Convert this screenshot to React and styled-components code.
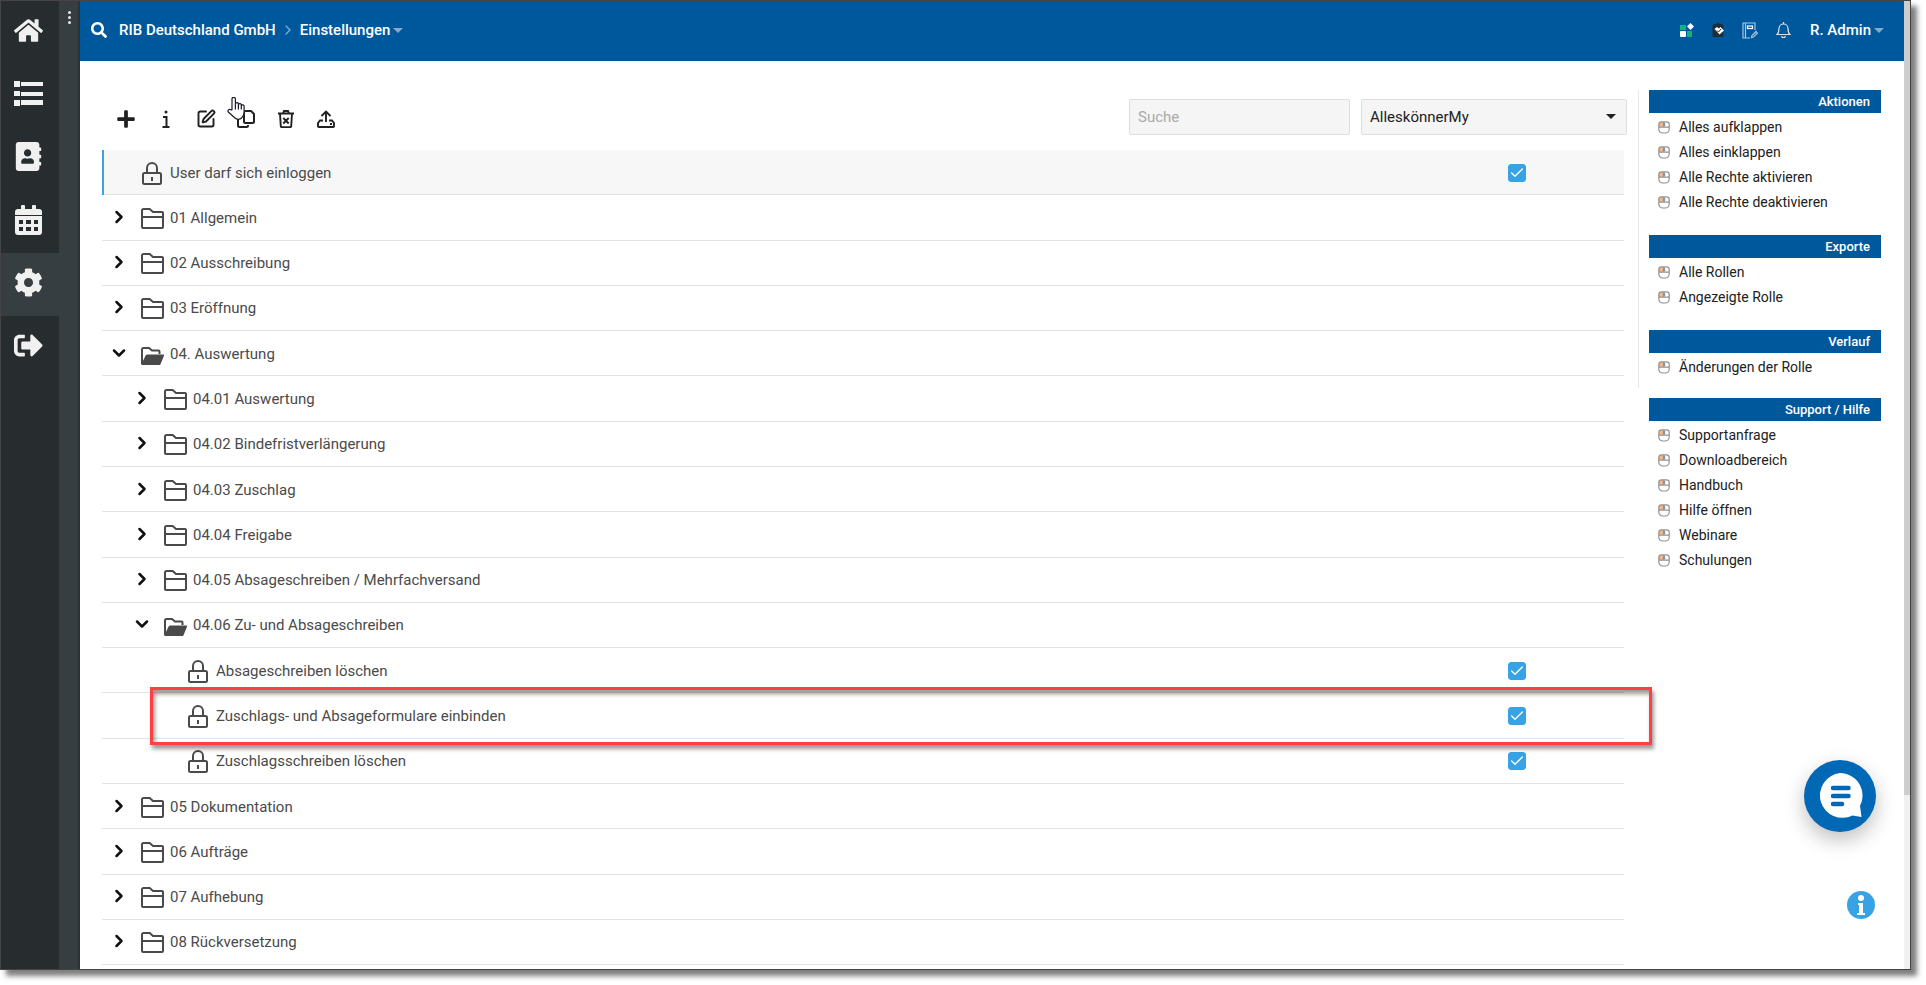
import styled, { createGlobalStyle } from "styled-components";
import { Check, ChevronDown, ChevronRight, SquarePen } from "lucide-react";
import {
  FaAddressBook,
  FaCog,
  FaHome,
  FaPlus,
  FaSearch,
  FaSignOutAlt,
} from "react-icons/fa";

const rows = [
  { label: "User darf sich einloggen", level: 0, type: "right", selected: true },
  { label: "01 Allgemein", level: 0, type: "folder" },
  { label: "02 Ausschreibung", level: 0, type: "folder" },
  { label: "03 Eröffnung", level: 0, type: "folder" },
  { label: "04. Auswertung", level: 0, type: "folder", open: true },
  { label: "04.01 Auswertung", level: 1, type: "folder" },
  { label: "04.02 Bindefristverlängerung", level: 1, type: "folder" },
  { label: "04.03 Zuschlag", level: 1, type: "folder" },
  { label: "04.04 Freigabe", level: 1, type: "folder" },
  { label: "04.05 Absageschreiben / Mehrfachversand", level: 1, type: "folder" },
  { label: "04.06 Zu- und Absageschreiben", level: 1, type: "folder", open: true },
  { label: "Absageschreiben löschen", level: 2, type: "right" },
  { label: "Zuschlags- und Absageformulare einbinden", level: 2, type: "right", marked: true },
  { label: "Zuschlagsschreiben löschen", level: 2, type: "right" },
  { label: "05 Dokumentation", level: 0, type: "folder" },
  { label: "06 Aufträge", level: 0, type: "folder" },
  { label: "07 Aufhebung", level: 0, type: "folder" },
  { label: "08 Rückversetzung", level: 0, type: "folder" },
];

const roleSections = [
  {
    title: "Aktionen",
    items: ["Alles aufklappen", "Alles einklappen", "Alle Rechte aktivieren", "Alle Rechte deaktivieren"],
  },
  { title: "Exporte", items: ["Alle Rollen", "Angezeigte Rolle"] },
  { title: "Verlauf", items: ["Änderungen der Rolle"] },
];

const supportSection = {
  title: "Support / Hilfe",
  items: ["Supportanfrage", "Downloadbereich", "Handbuch", "Hilfe öffnen", "Webinare", "Schulungen"],
};

/* ---------- icons ---------- */

const ListIcon = () => (
  <svg width="29" height="25" viewBox="0 0 29 25" fill="currentColor">
    <path d="M0 0h6v6H0zM0 10h6v5H0zM0 19h6v6H0zM7 1h22v4H7zM7 11h22v4H7zM7 19h22v5H7z" />
  </svg>
);

const CalendarIcon = () => (
  <svg width="27" height="30" viewBox="0 0 27 30" fill="currentColor">
    <path d="M6 1a1 1 0 0 1 1-1h2a1 1 0 0 1 1 1v3h7V1a1 1 0 0 1 1-1h2a1 1 0 0 1 1 1v3h3a3 3 0 0 1 3 3v3H0V7a3 3 0 0 1 3-3h3z" />
    <path
      fillRule="evenodd"
      d="M0 11h27v16a3 3 0 0 1-3 3H3a3 3 0 0 1-3-3zM4 15v4h4v-4zM11 15v4h5v-4zM19 15v4h4v-4zM4 22v4h4v-4zM11 22v4h5v-4zM19 22v4h4v-4z"
    />
  </svg>
);

const InfoIcon = () => (
  <svg width="18" height="18" viewBox="0 0 18 18" fill="none" stroke="currentColor" strokeWidth="2">
    <circle cx="9" cy="2" r="1.500" fill="currentColor" stroke="none" />
    <path d="M6 7h3.500v10M5.500 17h7" />
  </svg>
);

const CopyIcon = () => (
  <svg width="18" height="18" viewBox="0 0 18 18" fill="none" stroke="currentColor" strokeWidth="2" strokeLinejoin="round">
    <path d="M8.500 1h5.500l3 3v7.500a1.500 1.500 0 0 1-1.500 1.500h-7A1.500 1.500 0 0 1 7 11.500v-9A1.500 1.500 0 0 1 8.500 1z" />
    <path d="M4 5H2.500A1.500 1.500 0 0 0 1 6.500v9A1.500 1.500 0 0 0 2.500 17h7a1.500 1.500 0 0 0 1.500-1.500V15" />
  </svg>
);

const TrashIcon = () => (
  <svg width="18" height="18" viewBox="0 0 18 18" fill="none" stroke="currentColor" strokeWidth="1.900">
    <path d="M1 3.500h16M6 3.500 7 1h4l1 2.500M3 3.500l.8 12.700a1 1 0 0 0 1 .9h8.400a1 1 0 0 0 1-.9L15 3.500M6.300 8l5.400 5.500M11.700 8l-5.400 5.500" />
  </svg>
);

const UploadIcon = () => (
  <svg width="18" height="18" viewBox="0 0 18 18" fill="none" stroke="currentColor" strokeWidth="1.900">
    <path d="M9 12V1.500M4.500 6 9 1.500 13.500 6M6 10.500H3L1 13v3.200a.8.800 0 0 0 .8.800h14.400a.8.800 0 0 0 .8-.8V13l-2-2.500h-3" />
    <path d="M13 14h2" />
  </svg>
);

const LockIcon = () => (
  <svg width="24" height="26" viewBox="0 0 24 26" fill="none" stroke="currentColor" strokeWidth="2">
    <rect x="2" y="13" width="18" height="11" rx="1.500" />
    <path d="M6 13V8a5 5 0 0 1 10 0V13M11 17v4" />
  </svg>
);

const FolderIcon = () => (
  <svg width="24" height="26" viewBox="0 0 24 26" fill="none" stroke="currentColor" strokeWidth="2">
    <path d="M2.500 4h6.200l3.300 3h9a1 1 0 0 1 1 1v14a1 1 0 0 1-1 1H2a1 1 0 0 1-1-1V5.500a1.500 1.500 0 0 1 1.500-1.500zM1 12h21" />
  </svg>
);

const FolderOpenIcon = () => (
  <svg width="24" height="26" viewBox="0 0 24 26" fill="currentColor">
    <path
      d="M1 23V8.500A1.500 1.500 0 0 1 2.500 7h5.500l3 2.500h6.500a1 1 0 0 1 1 1V13"
      fill="none"
      stroke="currentColor"
      strokeWidth="2"
    />
    <path d="M6.500 13.500H22a1 1 0 0 1 .9 1.400l-3.400 8.300a1.500 1.500 0 0 1-1.400.9H1.500a1 1 0 0 1-.9-1.400l4-8.200a2 2 0 0 1 1.900-1z" />
  </svg>
);

const MouseIcon = () => (
  <svg width="12" height="13" viewBox="0 0 12 13">
    <path d="M1 3a2.300 2.300 0 0 1 2-2h3v5H1z" fill="#f8b787" />
    <path
      d="M3.500.8h5A2.700 2.700 0 0 1 11.200 3.500V8a4 4 0 0 1-4 4H4.800a4 4 0 0 1-4-4V3.500A2.700 2.700 0 0 1 3.500.8zM.8 6.200h10.400M6 .8v5.400"
      fill="none"
      stroke="#929292"
      strokeWidth="1.200"
    />
    <rect x="4.800" y="2" width="2.400" height="3" fill="#929292" />
  </svg>
);

const Caret = () => (
  <svg width="10" height="5" viewBox="0 0 10 5">
    <path d="M0 0h10L5 5z" fill="currentColor" />
  </svg>
);

const AppsIcon = () => (
  <svg width="14" height="14" viewBox="0 0 14 14">
    <rect x="0" y="2" width="6" height="5" fill="#14b573" />
    <rect x="7" y="8" width="5" height="6" fill="#14b573" />
    <rect x="0" y="8" width="6" height="6" rx="1" fill="#fff" />
    <path d="m10.500 0 3.500 3.500L10.500 7 7 3.500z" fill="#fff" />
  </svg>
);

const ClipboardIcon = () => (
  <svg width="12" height="16" viewBox="0 0 12 16">
    <path d="M1.500 2H4l2-1.500L8 2h2.500L11.500 4v11h-11V4z" fill="#1f2c3c" />
    <path d="m2.500 7 2.500-2 2 1.500L8.500 5 12 8.500 7.500 12.500z" fill="#fff" />
    <path d="m5 8.500 1.500 1.500L9 7" fill="none" stroke="#1f2c3c" />
  </svg>
);

const JournalIcon = () => (
  <svg width="16" height="17" viewBox="0 0 16 17" fill="none" stroke="#a9c5de" strokeWidth="1.200">
    <path d="M8 16H1V1h12v7M3.500 1v15" />
    <rect x="5.500" y="4" width="5" height="2.500" stroke="#fff" />
    <path d="m9.500 15.500.5-2 4-4 1.300 1.500-3.800 4z" />
  </svg>
);

const BellIcon = () => (
  <svg width="15" height="16" viewBox="0 0 15 16" fill="none" stroke="#d5e3ef" strokeWidth="1.200">
    <path d="M7.500 0v1.500M1 12.500c1.500-1.200 2-2.500 2-6a4.500 4.500 0 0 1 9 0c0 3.500.5 4.800 2 6zM5.800 14a1.700 1.700 0 0 0 3.400 0" />
  </svg>
);

const HandIcon = () => (
  <svg width="19" height="24" viewBox="0 0 19 24" fill="#fff" stroke="#1a1a2a" strokeWidth="1.200" strokeLinejoin="round">
    <path d="M5 13V2a1.700 1.700 0 0 1 3.400 0v6.500V7a1.500 1.500 0 0 1 3 .3v1.500-.8a1.400 1.400 0 0 1 2.900.3v1.400-.5a1.400 1.400 0 0 1 2.800.3v5.500c0 3-1.500 5-2.500 6-2 2-5 1.500-6.600 0L1.300 15c-1-1.500.7-3.300 2.200-2.300z" />
    <path d="M8.400 8.500v4M11.400 8.800v3.700M14.300 9.700v2.800" fill="none" />
  </svg>
);

const ChatIcon = () => (
  <svg width="46" height="46" viewBox="0 0 46 46">
    <path d="M23 0a22.500 22.500 0 0 1 20 32.800L44.500 44l-9-1.500A22.500 22.500 0 1 1 23 0z" fill="#fff" />
    <path d="M16 15h15.500M16 23h15.500M16 31h9" stroke="#0068b4" strokeWidth="4.500" strokeLinecap="round" />
  </svg>
);

const InfoCircle = () => (
  <svg width="28" height="28" viewBox="0 0 28 28">
    <circle cx="14" cy="14" r="14" fill="#38a3e4" />
    <circle cx="14" cy="7" r="3" fill="#fff" />
    <path d="M11 12h5v10h2v2h-8v-2h2v-8h-1z" fill="#fff" />
  </svg>
);

/* ---------- parts ---------- */

const Section = ({ title, items }) => (
  <section>
    <SectionTitle>{title}</SectionTitle>
    <LinkList>
      {items.map((item) => (
        <li key={item}>
          <SideLink href="#">
            <MouseIcon />
            {item}
          </SideLink>
        </li>
      ))}
    </LinkList>
  </section>
);

const TreeRow = ({ row, id }) => {
  const isFolder = row.type === "folder";
  return (
    <Row $level={row.level} $selected={row.selected}>
      <ToggleSlot>
        {isFolder && (
          <Toggle aria-label={row.label} aria-expanded={!!row.open}>
            {row.open ? (
              <ChevronDown size={20} strokeWidth={3} />
            ) : (
              <ChevronRight size={20} strokeWidth={3} />
            )}
          </Toggle>
        )}
      </ToggleSlot>
      <RowIcon>{isFolder ? row.open ? <FolderOpenIcon /> : <FolderIcon /> : <LockIcon />}</RowIcon>
      {isFolder ? <RowText>{row.label}</RowText> : <RowText as="label" htmlFor={id}>{row.label}</RowText>}
      {!isFolder && (
        <CheckWrap>
          <Checkbox id={id} type="checkbox" defaultChecked />
          <Check size={16} strokeWidth={2} />
        </CheckWrap>
      )}
      {row.marked && <Marker />}
    </Row>
  );
};

const App = () => {
  return (
    <Page>
      <GlobalStyle />
      <Window>
        <Rail>
          <RailLink href="#" aria-label="Start"><FaHome size={29} /></RailLink>
          <RailLink href="#" aria-label="Liste"><ListIcon /></RailLink>
          <RailLink href="#" aria-label="Adressbuch"><FaAddressBook size={29} /></RailLink>
          <RailLink href="#" aria-label="Kalender"><CalendarIcon /></RailLink>
          <RailLink href="#" aria-label="Einstellungen" $active><FaCog size={29} /></RailLink>
          <RailLink href="#" aria-label="Abmelden"><FaSignOutAlt size={29} /></RailLink>
        </Rail>
        <Strip>
          <StripButton aria-label="Menü">
            <i />
            <i />
            <i />
          </StripButton>
        </Strip>
        <Content>
          <Header>
            <IconButton aria-label="Suchen"><FaSearch size={16} /></IconButton>
            <Crumbs>
              <Crumb href="#">RIB Deutschland GmbH</Crumb>
              <CrumbArrow size={16} />
              <Crumb href="#">
                Einstellungen
                <Caret />
              </Crumb>
            </Crumbs>
            <HeaderTools>
              <IconButton aria-label="Anwendungen"><AppsIcon /></IconButton>
              <IconButton aria-label="Aufgaben"><ClipboardIcon /></IconButton>
              <IconButton aria-label="Journal"><JournalIcon /></IconButton>
              <IconButton aria-label="Benachrichtigungen"><BellIcon /></IconButton>
            </HeaderTools>
            <Crumb href="#">
              R. Admin
              <Caret />
            </Crumb>
          </Header>
          <Body>
            <Main>
              <Toolbar>
                <Tools>
                  <ToolButton aria-label="Neu"><FaPlus size={20} /></ToolButton>
                  <ToolButton aria-label="Info"><InfoIcon /></ToolButton>
                  <ToolButton aria-label="Bearbeiten"><SquarePen size={20} strokeWidth={2.3} /></ToolButton>
                  <ToolButton aria-label="Kopieren">
                    <CopyIcon />
                    <Pointer><HandIcon /></Pointer>
                  </ToolButton>
                  <ToolButton aria-label="Löschen"><TrashIcon /></ToolButton>
                  <ToolButton aria-label="Exportieren"><UploadIcon /></ToolButton>
                </Tools>
                <SearchInput type="text" placeholder="Suche" aria-label="Suche" />
                <SelectWrap>
                  <RoleSelect aria-label="Rolle" defaultValue="AlleskönnerMy">
                    <option>AlleskönnerMy</option>
                  </RoleSelect>
                  <Caret />
                </SelectWrap>
              </Toolbar>
              <Tree>
                {rows.map((row, i) => (
                  <TreeRow key={row.label} row={row} id={`recht-${i}`} />
                ))}
              </Tree>
            </Main>
            <Side>
              <RoleGroup>
                {roleSections.map((section) => (
                  <Section key={section.title} {...section} />
                ))}
              </RoleGroup>
              <SupportGroup>
                <Section {...supportSection} />
              </SupportGroup>
            </Side>
          </Body>
        </Content>
        <ScrollTrack>
          <ScrollThumb />
        </ScrollTrack>
        <ChatButton aria-label="Chat"><ChatIcon /></ChatButton>
        <InfoButton aria-label="Hilfe"><InfoCircle /></InfoButton>
      </Window>
    </Page>
  );
};

export default App;

const GlobalStyle = createGlobalStyle`
  * {
    box-sizing: border-box;
  }
  body {
    margin: 0;
    background: #fff;
    font-family: Roboto, "Liberation Sans", sans-serif;
    font-size: 15px;
    color: #212121;
  }
  button {
    padding: 0;
    border: 0;
    background: none;
    color: inherit;
    font: inherit;
    cursor: pointer;
  }
  a {
    color: inherit;
    text-decoration: none;
  }
  ul {
    margin: 0;
    padding: 0;
    list-style: none;
  }
  svg {
    display: block;
    flex-shrink: 0;
  }
`;

const Page = styled.div`
  display: flex;
  height: 100vh;
  padding: 0 15px 15px 0;
`;

const Window = styled.div`
  position: relative;
  flex: 1;
  display: flex;
  border: 1px solid #444;
  background: #fff;
  box-shadow: 6px 6px 5px rgba(0, 0, 0, 0.5);
`;

const Rail = styled.nav`
  width: 58px;
  background: #272c2e;
  color: #f0f0f0;
`;

const RailLink = styled.a`
  display: flex;
  align-items: center;
  height: 63px;
  padding: 0 16px 4px 12px;
  justify-content: center;
  background: ${({ $active }) => ($active ? "#373e41" : "transparent")};
`;

const Strip = styled.div`
  width: 21px;
  background: #373e41;
  border-right: 2px solid #2d3335;
`;

const StripButton = styled.button`
  display: flex;
  flex-direction: column;
  align-items: center;
  gap: 2px;
  width: 100%;
  padding: 10px 0 0 2px;

  i {
    width: 3px;
    height: 3px;
    border-radius: 50%;
    background: #e8e8e8;
  }
`;

const Content = styled.div`
  flex: 1;
  min-width: 0;
  display: flex;
  flex-direction: column;
`;

const Header = styled.header`
  display: flex;
  align-items: center;
  height: 60px;
  padding: 0 20px 2px 11px;
  background: #00589c;
  color: #fff;
`;

const IconButton = styled.button`
  display: flex;
`;

const Crumbs = styled.nav`
  display: flex;
  align-items: center;
  gap: 4px;
  flex: 1;
  margin-left: 12px;
`;

const Crumb = styled.a`
  display: flex;
  align-items: center;
  gap: 3px;
  font-weight: 500;

  svg {
    color: #80acce;
  }
`;

const CrumbArrow = styled(ChevronRight)`
  color: #80acce;
`;

const HeaderTools = styled.div`
  display: flex;
  align-items: center;
  gap: 18px;
  margin-right: 19px;
`;

const Body = styled.div`
  flex: 1;
  display: flex;
  align-items: stretch;
  min-height: 0;
  padding: 0 23px 4px 22px;
`;

const Main = styled.main`
  flex: 1;
  min-width: 0;
  display: flex;
  flex-direction: column;
  gap: 15px;
  padding-top: 38px;
`;

const Toolbar = styled.div`
  display: flex;
  align-items: center;
  gap: 11px;
  margin-right: 11px;
`;

const Tools = styled.div`
  flex: 1;
  display: flex;
  gap: 22px;
  padding: 4px 0 0 15px;
`;

const ToolButton = styled.button`
  position: relative;
  display: flex;
  align-items: center;
  justify-content: center;
  width: 18px;
  height: 20px;
`;

const Pointer = styled.span`
  position: absolute;
  top: -12px;
  left: -10px;
`;

const SearchInput = styled.input`
  width: 221px;
  height: 36px;
  padding: 0 8px;
  border: 1px solid #dedede;
  border-radius: 2px;
  background: #f5f5f5;
  font: inherit;
  color: #212121;

  &::placeholder {
    color: #a9a9a9;
  }
`;

const SelectWrap = styled.div`
  position: relative;
  width: 266px;

  svg {
    position: absolute;
    top: 15px;
    right: 11px;
    pointer-events: none;
  }
`;

const RoleSelect = styled.select`
  appearance: none;
  width: 100%;
  height: 36px;
  padding: 0 8px;
  border: 1px solid #dedede;
  border-radius: 2px;
  background: #f5f5f5;
  font: inherit;
  color: #212121;
`;

const Tree = styled.ul`
  flex: 1;
  display: flex;
  flex-direction: column;
  margin-right: 14px;
`;

const Row = styled.li`
  position: relative;
  flex: 1;
  display: flex;
  align-items: center;
  padding: 0 98px 0 ${({ $level, $selected }) => ($selected ? 4 : 6) + $level * 23}px;
  border-left: ${({ $selected }) => ($selected ? "2px solid #38a3e4" : "0")};
  background: ${({ $selected }) => ($selected ? "#f7f7f7" : "transparent")};
  box-shadow: inset 0 -1px #e2e2e2;
  color: #4a4a4a;
`;

const ToggleSlot = styled.span`
  width: 22px;
  margin-right: 11px;
`;

const Toggle = styled.button`
  display: flex;
  justify-content: center;
  width: 100%;
  padding-bottom: 2px;
  color: #111;
`;

const RowIcon = styled.span`
  margin-right: 5px;
`;

const RowText = styled.span`
  flex: 1;
`;

const CheckWrap = styled.span`
  position: relative;
  display: flex;

  svg {
    position: absolute;
    top: 1px;
    left: 1px;
    color: #fff;
    pointer-events: none;
  }
`;

const Checkbox = styled.input`
  appearance: none;
  width: 18px;
  height: 18px;
  margin: 0;
  border: 1px solid #38a3e4;
  border-radius: 3px;

  &:checked {
    background: #38a3e4;
  }
`;

const Marker = styled.span`
  position: absolute;
  z-index: 2;
  top: -6px;
  right: -28px;
  bottom: -6px;
  left: 48px;
  border: 3px solid #ff4040;
  box-shadow: 2px 4px 4px rgba(0, 0, 0, 0.4), inset 2px 4px 4px rgba(0, 0, 0, 0.4);
  pointer-events: none;
`;

const Side = styled.aside`
  width: 243px;
  padding-top: 29px;
`;

const RoleGroup = styled.div`
  display: flex;
  flex-direction: column;
  gap: 20px;
  padding: 0 0 8px 10px;
  border-left: 1px solid #e8e8e8;
`;

const SupportGroup = styled.div`
  padding: 10px 0 0 11px;
`;

const SectionTitle = styled.h2`
  margin: 0 0 2px;
  padding-right: 11px;
  background: #00589c;
  color: #fff;
  font-size: 13px;
  font-weight: 500;
  line-height: 23px;
  text-align: right;
`;

const LinkList = styled.ul`
  font-size: 14px;
  line-height: 25px;
`;

const SideLink = styled.a`
  display: flex;
  align-items: center;
  gap: 9px;
  padding-left: 9px;
`;

const ScrollTrack = styled.div`
  width: 6px;
  background: #f0f0f0;
`;

const ScrollThumb = styled.div`
  height: 82%;
  background: #cdcdcd;
`;

const ChatButton = styled.button`
  position: absolute;
  right: 34px;
  bottom: 137px;
  display: flex;
  align-items: center;
  justify-content: center;
  width: 72px;
  height: 72px;
  border-radius: 50%;
  background: #0068b4;
  box-shadow: 0 8px 20px rgba(0, 0, 0, 0.25);
`;

const InfoButton = styled.button`
  position: absolute;
  right: 35px;
  bottom: 50px;
`;
